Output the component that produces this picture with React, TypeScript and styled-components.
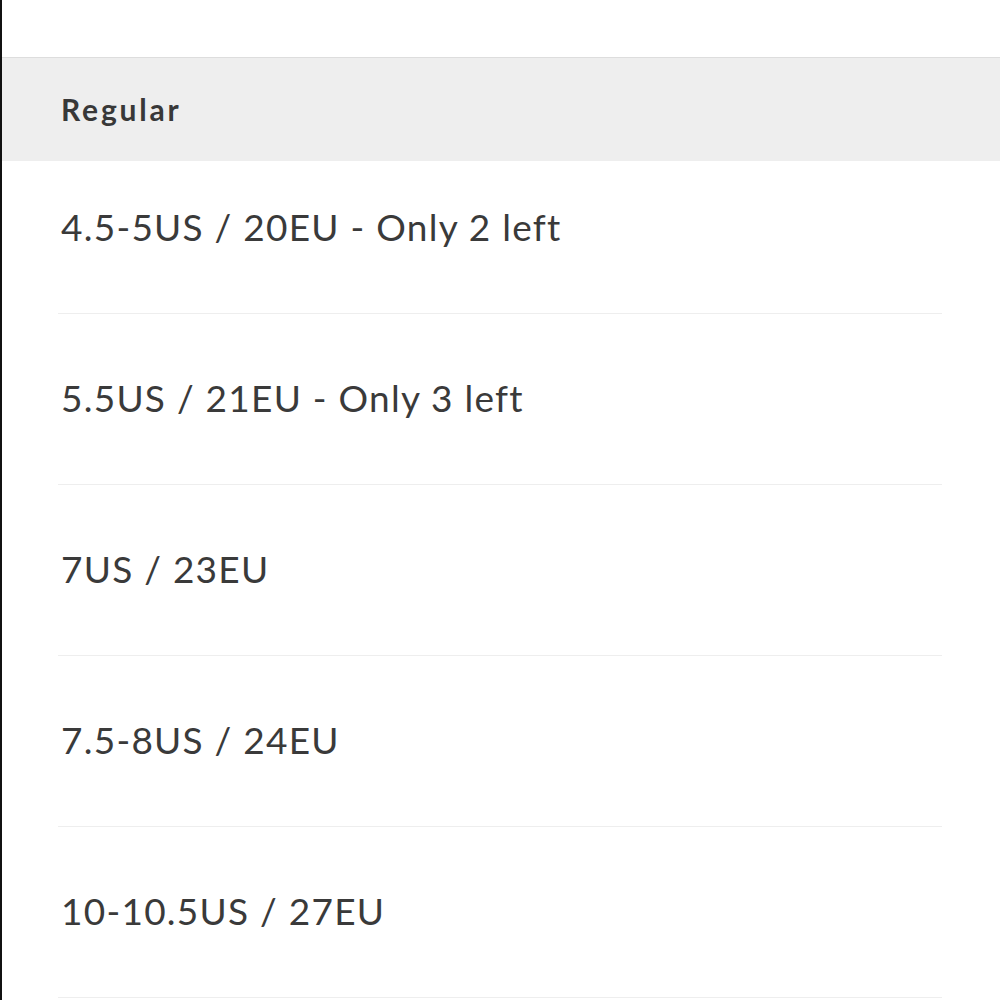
import styled, { createGlobalStyle } from 'styled-components';

interface ISize {
  label: string;
}

const sizes: ISize[] = [
  { label: '4.5-5US / 20EU - Only 2 left' },
  { label: '5.5US / 21EU - Only 3 left' },
  { label: '7US / 23EU' },
  { label: '7.5-8US / 24EU' },
  { label: '10-10.5US / 27EU' },
];

const App = () => (
  <>
    <GlobalSt />
    <PageSt>
      <GroupHeaderSt>
        <GroupTitleSt>Regular</GroupTitleSt>
      </GroupHeaderSt>
      <ListSt>
        {sizes.map(({ label }, i) => (
          <RowSt key={label} $first={i === 0}>
            <LabelSt>{label}</LabelSt>
          </RowSt>
        ))}
      </ListSt>
    </PageSt>
  </>
);

export default App;

const GlobalSt = createGlobalStyle`
  * { box-sizing: border-box; }
  body {
    margin: 0;
    background: #ffffff;
    font-family: Lato, "Open Sans", sans-serif;
    color: #333333;
  }
`;

const PageSt = styled.div`
  min-height: 1000px;
  border-left: 2px solid #111111;
  padding-top: 57px;
  overflow: hidden;
`;

const GroupHeaderSt = styled.div`
  height: 104px;
  border-top: 1px solid #dddddd;
  background: #eeeeee;
  display: flex;
  align-items: center;
  padding: 0 0 2px 59px;
`;

const GroupTitleSt = styled.h3`
  margin: 0;
  font-size: 30px;
  font-weight: 700;
  letter-spacing: 2.8px;
  color: #383838;
`;

const ListSt = styled.ul`
  list-style: none;
  margin: 0 58px 0 56px;
  padding: 0;
`;

const RowSt = styled.li<{ $first: boolean }>`
  display: flex;
  align-items: center;
  height: ${({ $first }) => ($first ? '153px' : '171px')};
  padding-bottom: ${({ $first }) => ($first ? '22px' : '4px')};
  border-bottom: 1px solid #eeeeee;
`;

const LabelSt = styled.span`
  font-size: 37px;
  font-weight: 400;
  letter-spacing: 1.25px;
  color: #3a3a3a;
  padding-left: 3px;
`;
